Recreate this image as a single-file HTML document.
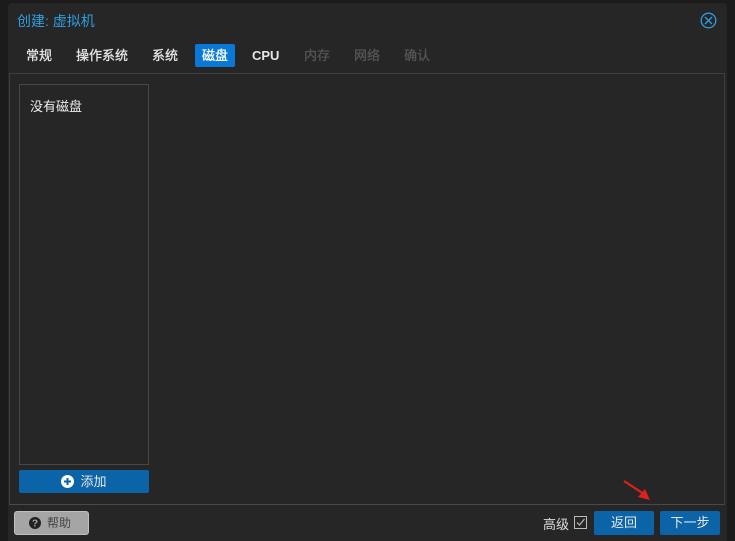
<!DOCTYPE html>
<html style="width:735px;height:541px;overflow:hidden"><head><meta charset="utf-8"><style>
*{box-sizing:border-box;margin:0;padding:0}
body{width:735px;height:541px;background:#1b1b1b;font-family:"Liberation Sans","Noto Sans CJK SC",sans-serif;position:relative;overflow:hidden}
.win{position:absolute;left:8px;top:3px;width:719px;height:538px;background:#262626;border-radius:4px 4px 0 0}
.title{position:absolute;left:17px;top:11px;font-size:14px;color:#2e9ee0}
.close{position:absolute;left:700px;top:12px}
.tab{position:absolute;top:44px;height:23px;line-height:23px;font-size:13px;color:#e6e6e6;padding:0 7px;-webkit-text-stroke:0.3px}
.tab.on{background:#0a79d6;border-radius:2px;color:#fff}
.tab.dis{color:#555}
.content{position:absolute;left:9px;top:73px;width:716px;height:432px;border:1px solid #3e3e3e;border-bottom:1px solid #4a4a4a;background:#262626}
.list{position:absolute;left:19px;top:84px;width:130px;height:381px;border:1px solid #474747}
.list span{position:absolute;left:10px;top:11px;font-size:13px;color:#eee}
.btn{position:absolute;background:#0b63a8;color:#e8e8e8;font-size:12px;text-align:center;border-radius:2px}
</style></head><body>
<div class="win"></div>
<div class="title">创建: 虚拟机</div>
<svg class="close" width="17" height="17" viewBox="0 0 17 17"><circle cx="8.5" cy="8.5" r="7.3" fill="none" stroke="#2e9ee0" stroke-width="1.3"/><path d="M5 5L12 12M12 5L5 12" stroke="#2e9ee0" stroke-width="1.3"/></svg>
<div class="tab" style="left:19px">常规</div>
<div class="tab" style="left:69px">操作系统</div>
<div class="tab" style="left:145px">系统</div>
<div class="tab on" style="left:195px">磁盘</div>
<div class="tab" style="left:245px;font-weight:bold;-webkit-text-stroke:0">CPU</div>
<div class="tab dis" style="left:297px">内存</div>
<div class="tab dis" style="left:347px">网络</div>
<div class="tab dis" style="left:397px">确认</div>
<div class="content"></div>
<div class="list"><span>没有磁盘</span></div>
<div class="btn" style="left:19px;top:470px;width:130px;height:23px;line-height:23px;font-size:13px"><svg width="13" height="13" viewBox="0 0 13 13" style="vertical-align:-2px;margin-right:6px"><circle cx="6.5" cy="6.5" r="6.5" fill="#fff"/><path d="M6.5 3v7M3 6.5h7" stroke="#0b63a8" stroke-width="2"/></svg>添加</div>
<div style="position:absolute;left:14px;top:511px;width:75px;height:24px;background:#a5a5a5;border:1px solid #c0c0c0;border-radius:3px;color:#444;font-size:12px;line-height:22px;padding-left:14px"><svg width="12" height="12" viewBox="0 0 12 12" style="vertical-align:-2px;margin-right:6px"><circle cx="6" cy="6" r="6" fill="#222"/><text x="6" y="9.5" font-size="10" font-weight="bold" fill="#a5a5a5" text-anchor="middle" font-family="Liberation Sans">?</text></svg>帮助</div>
<div style="position:absolute;left:543px;top:514px;font-size:13px;color:#ddd">高级</div>
<div style="position:absolute;left:574px;top:516px;width:13px;height:13px;border:1px solid #bbb;"><svg width="11" height="11" viewBox="0 0 11 11" style="position:absolute;left:0;top:0"><path d="M2 5.5L4.5 8L9.5 2" fill="none" stroke="#bbb" stroke-width="1.2"/></svg></div>
<div class="btn" style="left:594px;top:511px;width:60px;height:24px;line-height:24px;font-size:13px">返回</div>
<div class="btn" style="left:660px;top:511px;width:60px;height:24px;line-height:24px;font-size:13px">下一步</div>
<svg style="position:absolute;left:620px;top:478px" width="36" height="26" viewBox="0 0 36 26"><path d="M4 3L24 16" stroke="#e02020" stroke-width="2.2"/><path d="M30 22L18 19L25 11Z" fill="#e02020"/></svg>
</body></html>
